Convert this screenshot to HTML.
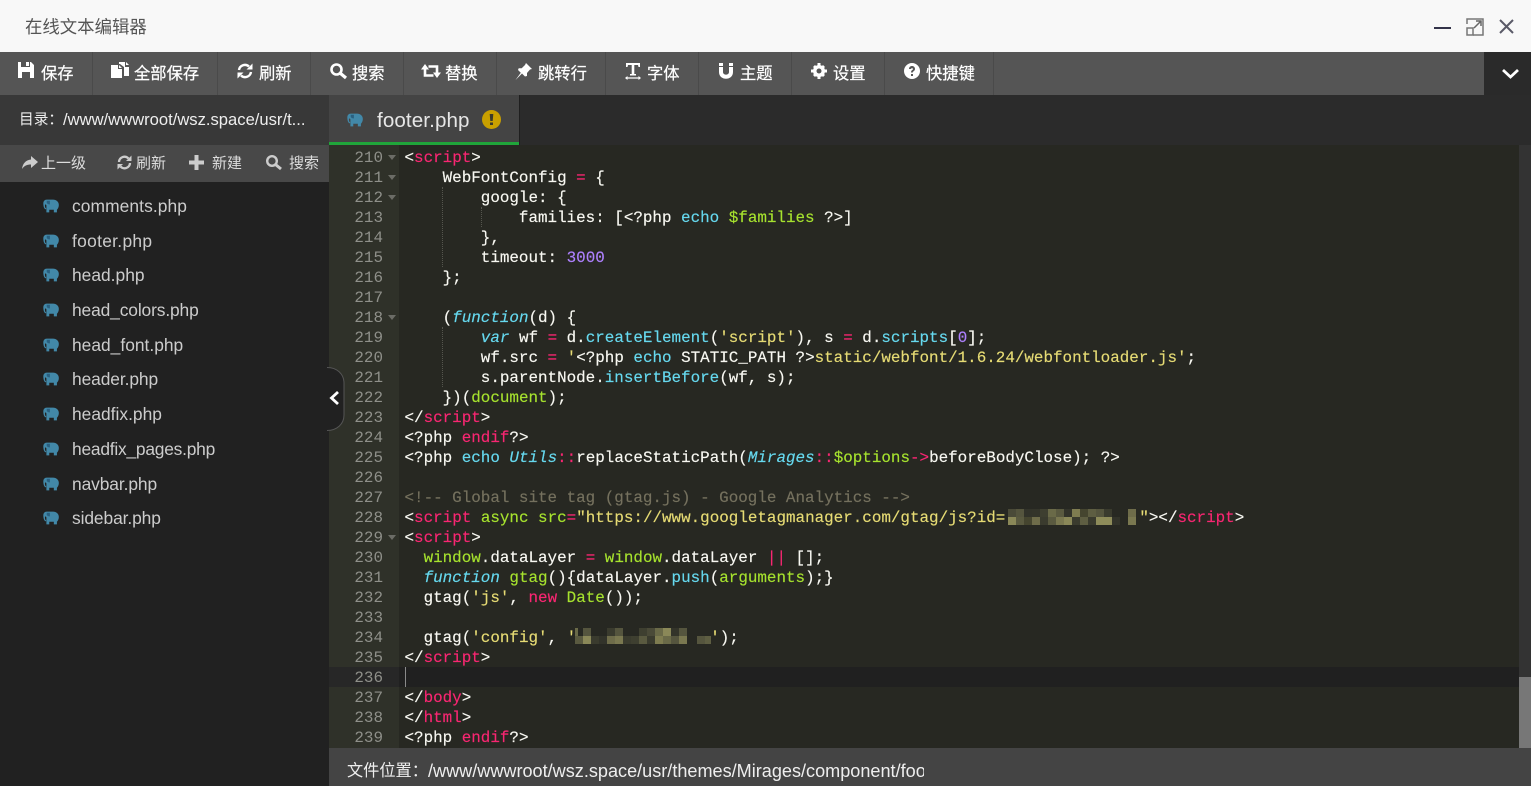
<!DOCTYPE html>
<html lang="zh-CN"><head><meta charset="utf-8"><title>在线文本编辑器</title>
<style>
html,body{margin:0;padding:0;width:1531px;height:786px;overflow:hidden;background:#212121;font-family:"Liberation Sans","Noto Sans CJK SC",sans-serif}
.a{position:absolute}
.t{position:absolute;white-space:nowrap;line-height:20px}
svg{position:absolute;overflow:visible}
.tb{color:#fff;font-size:16.300px;top:64px;-webkit-text-stroke:.2px #fff}
.sep{position:absolute;top:52px;width:1px;height:43px;background:#4a4a4a}
.st{color:#ddd;font-size:15px;top:154px}
.f{position:absolute;left:72px;color:#ccc;font-size:17.400px;line-height:24px;white-space:nowrap}
.n{position:absolute;left:329px;width:54px;text-align:right;color:#8f908a;font:15.900px/20px "Liberation Mono",monospace;margin-top:1px}
.c{position:absolute;left:404.500px;white-space:pre;color:#f8f8f2;font:15.900px/20px "Liberation Mono",monospace;margin-top:1px;-webkit-text-stroke:.15px}
.k{color:#f92672}.g{color:#a6e22e}.y{color:#e6db74}.b{color:#66d9ef}.i{color:#66d9ef;font-style:italic}.p{color:#ae81ff}.m{color:#75715e}
.fd{position:absolute;left:387.500px;width:0;height:0;border-left:4px solid transparent;border-right:4px solid transparent;border-top:5px solid #6b6c66}
.gd{position:absolute;width:0;border-left:1px dotted #55564e}
</style></head><body>
<svg width="0" height="0" style="position:absolute"><defs>
<symbol id="el" viewBox="0 0 16 13"><path fill="#4288a8" d="M3.500 .5C1.500 .5 .3 2 .3 4c0 1.700 .2 3.500 1.200 5 .6.800 1.500.7 1.500 0 0-.5-.8-.5-1-1.500-.3-1.200-.2-2 .2-2.500.4 0 .8.400 1 1V12.500h2.700V10h4.300v2.500h2.900V10c1-1 1.800-2.500 1.800-4.500 0-3-2.400-5-5.400-5z"/><path fill="#2a6080" d="M3.500 1.500h3v3.500c-1 0-2.500-.5-3-1.500z"/></symbol>
</defs></svg>

<!-- title bar -->
<div class="a" style="left:0;top:0;width:1531px;height:52px;background:#f8f8f8"></div>
<div class="t" style="left:25px;top:17px;font-size:17.400px;color:#555">在线文本编辑器</div>
<svg style="left:1434px;top:18px" width="18" height="18"><rect x="0" y="9" width="17" height="2" fill="#33334a"/></svg>
<svg style="left:1466px;top:18px" width="18" height="18" fill="none" stroke="#777" stroke-width="1.500"><path d="M1 6V1h16v16H7"/><rect x="1" y="10" width="6" height="7"/><path d="M8 10L15 3M10 3h5v5" stroke="#666"/></svg>
<svg style="left:1499px;top:19px" width="15" height="15" fill="none" stroke="#5a5a68" stroke-width="2"><path d="M1 1L14 14M14 1L1 14"/></svg>

<!-- toolbar -->
<div class="a" style="left:0;top:52px;width:1484px;height:43px;background:#555"></div>
<div class="a" style="left:1484px;top:52px;width:47px;height:43px;background:#2a2a2a"></div>
<div class="sep" style="left:92px"></div><div class="sep" style="left:217px"></div><div class="sep" style="left:310px"></div><div class="sep" style="left:403px"></div><div class="sep" style="left:496px"></div><div class="sep" style="left:605px"></div><div class="sep" style="left:698px"></div><div class="sep" style="left:791px"></div><div class="sep" style="left:884px"></div><div class="sep" style="left:993px"></div>
<svg style="left:18px;top:62px" width="16" height="16" fill="#fff"><path d="M0 0h3v5h9V0h1l3 3v13H0zM4 10v6h8v-6zM8 0h3v4H8z"/></svg>
<div class="t tb" style="left:41px">保存</div>
<svg style="left:111px;top:62px" width="18" height="17" fill="#fff"><path d="M0 3h7v4h4v9H0zM8 3l3 3H8zM8 0h6v5h4v9h-5V5L9 2H8zM15 0l3 3h-3z"/></svg>
<div class="t tb" style="left:134px">全部保存</div>
<svg style="left:237px;top:63px" width="16" height="16" fill="none" stroke="#fff" stroke-width="2.400"><path d="M2 7a6 6 0 0 1 10-3.500M14 9a6 6 0 0 1-10 3.500"/><path d="M15.500 .5v6h-6zM.5 15.500v-6h6z" fill="#fff" stroke="none"/></svg>
<div class="t tb" style="left:259px">刷新</div>
<svg style="left:330px;top:63px" width="17" height="16" fill="none" stroke="#fff" stroke-width="2.600"><circle cx="6.500" cy="6.500" r="5"/><path d="M10 10l6 5" stroke-width="3.200"/></svg>
<div class="t tb" style="left:352px">搜索</div>
<svg style="left:421px;top:64px" width="20" height="15"><path d="M4 5v6.500h8.500M7.500 2.500H16V9" fill="none" stroke="#fff" stroke-width="2.600"/><path d="M4 0l4 5.500H0zM16 14l-4-5.500h8z" fill="#fff"/></svg>
<div class="t tb" style="left:445px">替换</div>
<svg style="left:515px;top:63px" width="18" height="17" fill="#fff"><path d="M11 0l6 6-2 .5-3 3.500 0 3-2 .5-3-3-6.500 6.500 5.300-7.300-2.800-2.700 .7-1.800h3L10 2z"/></svg>
<div class="t tb" style="left:538px">跳转行</div>
<svg style="left:625px;top:63px" width="16" height="17" fill="#fff"><path d="M1 0h14v4h-1.500L13 2H9.300v9H11v1.500H5V11h1.700V2H3L2.500 4H1zM0 15l2.500-2v1.400h11V13l2.500 2-2.500 2v-1.400h-11V17z"/></svg>
<div class="t tb" style="left:647px">字体</div>
<svg style="left:718px;top:63px" width="16" height="16" fill="#fff"><path d="M1 0h4v3H1zM11 0h4v3h-4zM1 4h4v5c0 3.500 6 3.500 6 0V4h4v5c0 9-14 9-14 0z"/></svg>
<div class="t tb" style="left:740px">主题</div>
<svg style="left:811px;top:63px" width="16" height="16"><path d="M6.500 0h3v16h-3zM0 6.500h16v3H0zM2 4l2-2 10 10-2 2zM12 2l2 2L4 14l-2-2z" fill="#fff"/><circle cx="8" cy="8" r="4.500" fill="none" stroke="#fff" stroke-width="3"/><circle cx="8" cy="8" r="2.500" fill="#555"/></svg>
<div class="t tb" style="left:833px">设置</div>
<svg style="left:904px;top:63px" width="16" height="16"><circle cx="8" cy="8" r="8" fill="#fff"/><path d="M5 6c0-4 6-4 6 0 0 2-2 2-2.200 3.500H7c0-2.500 2-2.500 2-3.500s-2-1-2 0zM7 11h2v2H7z" fill="#555"/></svg>
<div class="t tb" style="left:926px">快捷键</div>
<svg style="left:1501px;top:68px" width="19" height="12" fill="none" stroke="#fff" stroke-width="2.800"><path d="M2 2l7.500 7L17 2"/></svg>

<!-- sidebar -->
<div class="a" style="left:0;top:95px;width:329px;height:50px;background:#383838"></div>
<div class="t" style="left:19px;top:110px;font-size:14.700px;color:#eee">目录：</div>
<div class="t" style="left:63px;top:110px;font-size:16.600px;color:#eee">/www/wwwroot/wsz.space/usr/t...</div>
<div class="a" style="left:0;top:145px;width:329px;height:37px;background:#484848"></div>
<svg style="left:22px;top:156px" width="16" height="14" fill="#ccc"><path d="M9 0l7 6-7 6V8.500C5 8.500 2.500 9.500 0 13c.5-5 3.500-9 9-9.500z"/></svg>
<div class="t st" style="left:41px">上一级</div>
<svg style="left:117px;top:155px" width="15" height="15" fill="none" stroke="#ccc" stroke-width="2.300"><path d="M2 7a5.500 5.500 0 0 1 9.500-3.500M13 8a5.500 5.500 0 0 1-9.500 3.500"/><path d="M14.500 .5v5.500h-5.500zM.5 14.500V9h5.500z" fill="#ccc" stroke="none"/></svg>
<div class="t st" style="left:136px">刷新</div>
<svg style="left:189px;top:155px" width="15" height="15" fill="#ccc"><path d="M5.500 0h4v5.500H15v4H9.500V15h-4V9.500H0v-4h5.500z"/></svg>
<div class="t st" style="left:212px">新建</div>
<svg style="left:266px;top:155px" width="16" height="15" fill="none" stroke="#ccc" stroke-width="2.400"><circle cx="6" cy="6" r="4.800"/><path d="M9.500 9.500L15 14" stroke-width="3"/></svg>
<div class="t st" style="left:289px">搜索</div>
<div class="a" style="left:0;top:182px;width:329px;height:604px;background:#212121"></div>

<svg style="left:43px;top:199px" width="17" height="14"><use href="#el"/></svg><div class="f" style="top:194px;letter-spacing:.08px">comments.php</div>
<svg style="left:43px;top:234px" width="17" height="14"><use href="#el"/></svg><div class="f" style="top:229px;letter-spacing:.3px">footer.php</div>
<svg style="left:43px;top:268px" width="17" height="14"><use href="#el"/></svg><div class="f" style="top:263px">head.php</div>
<svg style="left:43px;top:303px" width="17" height="14"><use href="#el"/></svg><div class="f" style="top:298px;letter-spacing:-.13px">head_colors.php</div>
<svg style="left:43px;top:338px" width="17" height="14"><use href="#el"/></svg><div class="f" style="top:333px">head_font.php</div>
<svg style="left:43px;top:372px" width="17" height="14"><use href="#el"/></svg><div class="f" style="top:367px;letter-spacing:-.1px">header.php</div>
<svg style="left:43px;top:407px" width="17" height="14"><use href="#el"/></svg><div class="f" style="top:402px">headfix.php</div>
<svg style="left:43px;top:442px" width="17" height="14"><use href="#el"/></svg><div class="f" style="top:437px;letter-spacing:-.23px">headfix_pages.php</div>
<svg style="left:43px;top:477px" width="17" height="14"><use href="#el"/></svg><div class="f" style="top:472px;letter-spacing:-.1px">navbar.php</div>
<svg style="left:43px;top:511px" width="17" height="14"><use href="#el"/></svg><div class="f" style="top:506px;letter-spacing:-.1px">sidebar.php</div>

<!-- editor -->
<div class="a" style="left:329px;top:145px;width:70px;height:603px;background:#2f3129"></div>
<div class="a" style="left:399px;top:145px;width:1120px;height:603px;background:#272822"></div>
<div class="a" style="left:329px;top:667px;width:70px;height:20px;background:#272727"></div>
<div class="a" style="left:399px;top:667px;width:1120px;height:20px;background:#202020"></div>
<div class="a" style="left:1519px;top:145px;width:12px;height:603px;background:#333"></div>
<div class="a" style="left:1519px;top:677px;width:12px;height:71px;background:#777"></div>

<div class="gd" style="left:442px;top:187px;height:80px"></div>
<div class="gd" style="left:481px;top:207px;height:20px"></div>
<div class="gd" style="left:442px;top:327px;height:60px"></div>
<div class="fd" style="top:155px"></div><div class="fd" style="top:175px"></div><div class="fd" style="top:195px"></div><div class="fd" style="top:315px"></div><div class="fd" style="top:535px"></div>

<div class="n" style="top:147px">210</div><div class="c" style="top:147px">&lt;<span class="k">script</span>&gt;</div>
<div class="n" style="top:167px">211</div><div class="c" style="top:167px">    WebFontConfig <span class="k">=</span> {</div>
<div class="n" style="top:187px">212</div><div class="c" style="top:187px">        google: {</div>
<div class="n" style="top:207px">213</div><div class="c" style="top:207px">            families: [&lt;?php <span class="b">echo</span> <span class="g">$families</span> ?&gt;]</div>
<div class="n" style="top:227px">214</div><div class="c" style="top:227px">        },</div>
<div class="n" style="top:247px">215</div><div class="c" style="top:247px">        timeout: <span class="p">3000</span></div>
<div class="n" style="top:267px">216</div><div class="c" style="top:267px">    };</div>
<div class="n" style="top:287px">217</div>
<div class="n" style="top:307px">218</div><div class="c" style="top:307px">    (<span class="i">function</span>(d) {</div>
<div class="n" style="top:327px">219</div><div class="c" style="top:327px">        <span class="i">var</span> wf <span class="k">=</span> d.<span class="b">createElement</span>(<span class="y">'script'</span>), s <span class="k">=</span> d.<span class="b">scripts</span>[<span class="p">0</span>];</div>
<div class="n" style="top:347px">220</div><div class="c" style="top:347px">        wf.src <span class="k">=</span> <span class="y">'</span>&lt;?php <span class="b">echo</span> STATIC_PATH ?&gt;<span class="y">static/webfont/1.6.24/webfontloader.js'</span>;</div>
<div class="n" style="top:367px">221</div><div class="c" style="top:367px">        s.parentNode.<span class="b">insertBefore</span>(wf, s);</div>
<div class="n" style="top:387px">222</div><div class="c" style="top:387px">    })(<span class="g">document</span>);</div>
<div class="n" style="top:407px">223</div><div class="c" style="top:407px">&lt;/<span class="k">script</span>&gt;</div>
<div class="n" style="top:427px">224</div><div class="c" style="top:427px">&lt;?php <span class="k">endif</span>?&gt;</div>
<div class="n" style="top:447px">225</div><div class="c" style="top:447px">&lt;?php <span class="b">echo</span> <span class="i">Utils</span><span class="k">::</span>replaceStaticPath(<span class="i">Mirages</span><span class="k">::</span><span class="g">$options</span><span class="k">-&gt;</span>beforeBodyClose); ?&gt;</div>
<div class="n" style="top:467px">226</div>
<div class="n" style="top:487px">227</div><div class="c m" style="top:487px;color:#75715e">&lt;!-- Global site tag (gtag.js) - Google Analytics --&gt;</div>
<div class="n" style="top:507px">228</div><div class="c" style="top:507px">&lt;<span class="k">script</span> <span class="g">async</span> <span class="g">src</span><span class="k">=</span><span class="y">"https://www.googletagmanager.com/gtag/js?id=</span><span class="y" style="display:inline-block;width:134px">&nbsp;</span><span class="y">"</span>&gt;&lt;/<span class="k">script</span>&gt;</div>
<div class="n" style="top:527px">229</div><div class="c" style="top:527px">&lt;<span class="k">script</span>&gt;</div>
<div class="n" style="top:547px">230</div><div class="c" style="top:547px">  <span class="g">window</span>.dataLayer <span class="k">=</span> <span class="g">window</span>.dataLayer <span class="k">||</span> [];</div>
<div class="n" style="top:567px">231</div><div class="c" style="top:567px">  <span class="i">function</span> <span class="g">gtag</span>(){dataLayer.<span class="b">push</span>(<span class="g">arguments</span>);}</div>
<div class="n" style="top:587px">232</div><div class="c" style="top:587px">  gtag(<span class="y">'js'</span>, <span class="k">new</span> <span class="g">Date</span>());</div>
<div class="n" style="top:607px">233</div>
<div class="n" style="top:627px">234</div><div class="c" style="top:627px">  gtag(<span class="y">'config'</span>, <span class="y">'</span><span style="display:inline-block;width:134px">&nbsp;</span><span class="y">'</span>);</div>
<div class="n" style="top:647px">235</div><div class="c" style="top:647px">&lt;/<span class="k">script</span>&gt;</div>
<div class="n" style="top:667px">236</div>
<div class="n" style="top:687px">237</div><div class="c" style="top:687px">&lt;/<span class="k">body</span>&gt;</div>
<div class="n" style="top:707px">238</div><div class="c" style="top:707px">&lt;/<span class="k">html</span>&gt;</div>
<div class="n" style="top:727px">239</div><div class="c" style="top:727px">&lt;?php <span class="k">endif</span>?&gt;</div>
<div class="a" style="left:405px;top:667px;width:1px;height:20px;background:#8a8a8a"></div>

<!-- pixelated redactions -->
<svg style="left:1008px;top:509px" width="136" height="16" shape-rendering="crispEdges">
<rect x="0" y="0" width="8" height="8" fill="#4a4a38"/><rect x="8" y="0" width="8" height="8" fill="#55553e"/><rect x="16" y="0" width="8" height="8" fill="#32332a"/><rect x="24" y="0" width="8" height="8" fill="#33342a"/><rect x="32" y="0" width="8" height="8" fill="#3e3f30"/><rect x="40" y="0" width="8" height="8" fill="#6a6a48"/><rect x="48" y="0" width="8" height="8" fill="#5a5a40"/><rect x="56" y="0" width="8" height="8" fill="#32332a"/><rect x="64" y="0" width="8" height="8" fill="#7e7c50"/><rect x="72" y="0" width="8" height="8" fill="#45452f"/><rect x="80" y="0" width="8" height="8" fill="#5e5e42"/><rect x="88" y="0" width="8" height="8" fill="#55553e"/><rect x="96" y="0" width="8" height="8" fill="#3a3b2e"/><rect x="120" y="0" width="8" height="8" fill="#6e6c4a"/>
<rect x="0" y="8" width="8" height="8" fill="#8a8858"/><rect x="8" y="8" width="8" height="8" fill="#5a5a40"/><rect x="16" y="8" width="8" height="8" fill="#45452f"/><rect x="24" y="8" width="8" height="8" fill="#6e6c4a"/><rect x="32" y="8" width="8" height="8" fill="#3a3b2e"/><rect x="40" y="8" width="8" height="8" fill="#5a5a40"/><rect x="48" y="8" width="8" height="8" fill="#7a7850"/><rect x="56" y="8" width="8" height="8" fill="#8a8858"/><rect x="64" y="8" width="8" height="8" fill="#3a3b2e"/><rect x="72" y="8" width="8" height="8" fill="#5e5e42"/><rect x="80" y="8" width="8" height="8" fill="#3a3b2e"/><rect x="88" y="8" width="8" height="8" fill="#8e8c5a"/><rect x="96" y="8" width="8" height="8" fill="#8e8c5a"/><rect x="104" y="8" width="8" height="8" fill="#32332a"/><rect x="120" y="8" width="8" height="8" fill="#7a7850"/>
</svg>
<svg style="left:575px;top:628px" width="136" height="16" shape-rendering="crispEdges">
<rect x="0" y="0" width="3" height="8" fill="#6a6a48"/><rect x="8" y="0" width="8" height="8" fill="#55553e"/><rect x="32" y="0" width="8" height="8" fill="#3a3b2e"/><rect x="40" y="0" width="8" height="8" fill="#55553e"/><rect x="64" y="0" width="8" height="8" fill="#3e3f30"/><rect x="72" y="0" width="8" height="8" fill="#4a4a38"/><rect x="80" y="0" width="8" height="8" fill="#6a6a48"/><rect x="88" y="0" width="8" height="8" fill="#8a8858"/><rect x="96" y="0" width="8" height="8" fill="#33342a"/><rect x="104" y="0" width="8" height="8" fill="#55553e"/>
<rect x="0" y="8" width="8" height="8" fill="#5a5a40"/><rect x="8" y="8" width="8" height="8" fill="#8a8858"/><rect x="16" y="8" width="8" height="8" fill="#3a3b2e"/><rect x="24" y="8" width="8" height="8" fill="#32332a"/><rect x="32" y="8" width="8" height="8" fill="#6e6c4a"/><rect x="40" y="8" width="8" height="8" fill="#7a7850"/><rect x="48" y="8" width="8" height="8" fill="#3a3b2e"/><rect x="56" y="8" width="8" height="8" fill="#3e3f30"/><rect x="64" y="8" width="8" height="8" fill="#5a5a40"/><rect x="72" y="8" width="8" height="8" fill="#3a3b2e"/><rect x="80" y="8" width="8" height="8" fill="#7e7c50"/><rect x="88" y="8" width="8" height="8" fill="#6a6a48"/><rect x="96" y="8" width="8" height="8" fill="#55553e"/><rect x="104" y="8" width="8" height="8" fill="#7a7850"/><rect x="122" y="8" width="8" height="8" fill="#55553e"/><rect x="130" y="8" width="6" height="8" fill="#5e5e42"/>
</svg>

<!-- tab row -->
<div class="a" style="left:329px;top:95px;width:1202px;height:50px;background:#2b2b2b"></div>
<div class="a" style="left:329px;top:95px;width:190px;height:47px;background:#444"></div>
<div class="a" style="left:329px;top:142px;width:190px;height:3px;background:#20a53a"></div>
<div class="a" style="left:519px;top:95px;width:1px;height:50px;background:#1f1f1f"></div>
<svg style="left:347px;top:113px" width="17" height="14"><use href="#el"/></svg>
<div class="t" style="left:377px;top:111px;font-size:20.600px;letter-spacing:.1px;color:#e6e6e6">footer.php</div>
<svg style="left:482px;top:110px" width="19" height="19"><circle cx="9.500" cy="9.500" r="9.500" fill="#c9a000"/><path d="M7.700 4h3.600l-.6 7H8.300zM8 12.500h3V15H8z" fill="#3a3a2a"/></svg>

<!-- collapse handle -->
<svg style="left:327px;top:367px" width="18" height="64"><path d="M0 .5C10 .5 17 7 17 16V48c0 9-7 15.500-17 15.500z" fill="#212121"/><path d="M0 .5C10 .5 17 7 17 16V48c0 9-7 15.500-17 15.500" fill="none" stroke="#555" stroke-width="1"/><path d="M11 25l-6.500 6 6.500 6" fill="none" stroke="#fff" stroke-width="2.800"/></svg>

<!-- status -->
<div class="a" style="left:329px;top:748px;width:1202px;height:38px;background:#444"></div>
<div class="t" style="left:347px;top:761px;font-size:16.200px;color:#eee">文件位置：</div>
<div class="t" style="left:428px;top:761px;font-size:18.100px;color:#eee;width:496px;overflow:hidden">/www/wwwroot/wsz.space/usr/themes/Mirages/component/foo</div>
</body></html>
